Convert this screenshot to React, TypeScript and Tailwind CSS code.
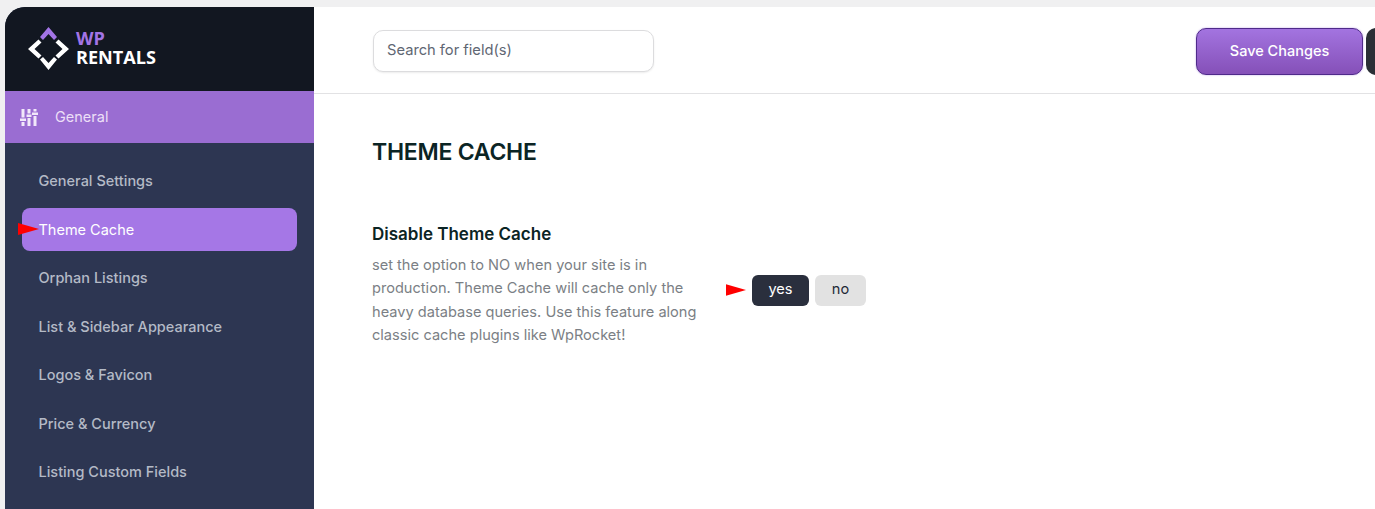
import React from 'react';

const menu = ['General Settings', 'Theme Cache', 'Orphan Listings', 'List & Sidebar Appearance', 'Logos & Favicon', 'Price & Currency', 'Listing Custom Fields'];

const RedArrow = ({ className }: { className: string }) => (
  <svg viewBox="0 0 21 12" className={className}>
    <polygon points="0,0 21,6 0,12" fill="#ff0000" />
  </svg>
);

const Logo = () => (
  <svg viewBox="0 0 43 43" className="w-[43px] h-[43px] shrink-0">
    <path d="M21.5 0 L30 10 L27 13 L21.5 7 L16 13 L13 10 Z" fill="#a374e6" />
    <path d="M11.5 12.5 L14.5 15.5 L7.5 22 L14.5 28.5 L11.5 31.5 L1 22 Z" fill="#fff" />
    <path d="M31.5 12.5 L28.5 15.5 L35.5 22 L28.5 28.5 L31.5 31.5 L42 22 Z" fill="#fff" />
    <path d="M13 32.5 L16 30 L21.5 36 L27 30 L30 32.5 L21.5 43 Z" fill="#fff" />
  </svg>
);

const SlidersIcon = () => (
  <svg viewBox="0 0 18 18" className="w-[18px] h-[18px] shrink-0" fill="#f1e8fa">
    <rect x="1.5" y="1" width="3" height="8.5" />
    <rect x="0" y="10.5" width="6" height="2.5" />
    <rect x="1.5" y="14" width="3" height="4" />
    <rect x="7.5" y="1" width="3" height="4.5" />
    <rect x="6.5" y="6.5" width="5" height="2.5" />
    <rect x="7.5" y="10" width="3" height="8" />
    <rect x="13.5" y="1" width="3" height="2.5" />
    <rect x="12" y="4.5" width="6" height="2.5" />
    <rect x="13.5" y="8" width="3" height="10" />
  </svg>
);

export default function App() {
  return (
    <div className="w-[1375px] h-[509px] overflow-hidden bg-[#f0f0f1] pt-[7px] pl-[5px] font-['Inter',sans-serif]">
      <div className="flex h-[502px] w-[1370px] rounded-tl-[20px] overflow-hidden bg-white">
        <aside className="w-[309px] shrink-0 bg-[#2d3652] flex flex-col">
          <div className="h-[84px] bg-[#121721] flex items-center pl-[22px] gap-[6px] pb-[1px]">
            <Logo />
            <div className="font-['Open_Sans',sans-serif] font-bold text-[18.1px] leading-[19px] -mt-[1px]">
              <div className="text-[#a374e6]">WP</div>
              <div className="text-white">RENTALS</div>
            </div>
          </div>
          <div className="h-[52px] bg-[#9a6dd2] flex items-center pl-[15px] text-[14.5px] text-[#ecdff7]">
            <SlidersIcon />
            <span className="ml-[17px]">General</span>
          </div>
          <nav className="flex flex-col gap-[5.5px] pt-[16.5px] px-[17px]">
            {menu.map((item) => (
              <div
                key={item}
                className={
                  item === 'Theme Cache'
                    ? 'relative h-[43px] rounded-[8px] bg-[#a577e6] text-white text-[14.5px] flex items-center pl-[16.5px] pt-[1px]'
                    : 'h-[43px] rounded-[8px] text-[#b4bac6] text-[14.5px] font-medium flex items-center pl-[16.5px]'
                }
              >
                {item}
                {item === 'Theme Cache' && <RedArrow className="absolute left-[-4px] top-[15px] w-[21px] h-[12px]" />}
              </div>
            ))}
          </nav>
        </aside>
        <main className="flex-1 min-w-0 overflow-hidden">
          <header className="h-[87px] border-b border-[#e2e2e4] flex items-center justify-between pl-[59px] pt-[2px]">
            <div className="w-[281px] h-[42px] rounded-[10px] border border-[#dcdcde] bg-white shadow-[0_1px_2px_rgba(0,0,0,0.08)] flex items-center pl-[13px] pb-[2px] text-[14.7px] text-[#5f6773]">
              Search for field(s)
            </div>
            <div className="flex items-center gap-[3px] shrink-0 -mr-[51px]">
              <div className="w-[167px] h-[47px] rounded-[10px] border border-[#4f2a8a] shadow-[0_0_2px_#b99be6] bg-gradient-to-b from-[#a374e0] to-[#8550b8] text-white text-[14.5px] font-medium flex items-center justify-center">
                Save Changes
              </div>
              <div className="w-[60px] h-[47px] rounded-[10px] bg-[#2b2f36]" />
            </div>
          </header>
          <section className="pl-[58px]">
            <h1 className="mt-[44px] text-[23px] leading-[28px] font-semibold tracking-[-0.25px] text-[#0b2424]">THEME CACHE</h1>
            <div className="flex items-center mt-[56px]">
              <div className="w-[330px] shrink-0">
                <h2 className="text-[17px] leading-[24px] font-semibold text-[#0b2424]">Disable Theme Cache</h2>
                <p className="mt-[8px] text-[14.6px] leading-[23.4px] text-[#7b7f85]">
                  set the option to NO when your site is in production. Theme Cache will cache only the heavy database queries. Use this feature along classic cache plugins like WpRocket!
                </p>
              </div>
              <div className="flex items-center gap-[6px] ml-[24px] mt-[11px]">
                <RedArrow className="w-[20px] h-[12px]" />
                <div className="w-[57px] h-[31px] rounded-[6px] bg-[#2a2f3d] text-white text-[14.6px] flex items-center justify-center">yes</div>
                <div className="w-[51px] h-[31px] rounded-[6px] bg-[#e2e2e2] text-[#1f2937] text-[14.6px] flex items-center justify-center">no</div>
              </div>
            </div>
          </section>
        </main>
      </div>
    </div>
  );
}
